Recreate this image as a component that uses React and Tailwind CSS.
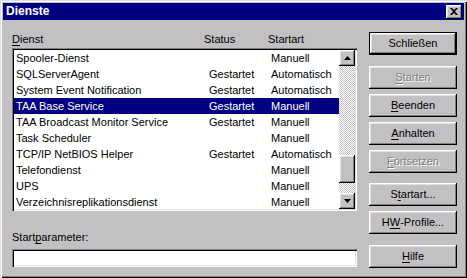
import React from 'react';

const services = [
  { name: 'Spooler-Dienst', status: '', start: 'Manuell' },
  { name: 'SQLServerAgent', status: 'Gestartet', start: 'Automatisch' },
  { name: 'System Event Notification', status: 'Gestartet', start: 'Automatisch' },
  { name: 'TAA Base Service', status: 'Gestartet', start: 'Manuell', selected: true },
  { name: 'TAA Broadcast Monitor Service', status: 'Gestartet', start: 'Manuell' },
  { name: 'Task Scheduler', status: '', start: 'Manuell' },
  { name: 'TCP/IP NetBIOS Helper', status: 'Gestartet', start: 'Automatisch' },
  { name: 'Telefondienst', status: '', start: 'Manuell' },
  { name: 'UPS', status: '', start: 'Manuell' },
  { name: 'Verzeichnisreplikationsdienst', status: '', start: 'Manuell' },
];

const bevel =
  'shadow-[inset_-1px_-1px_0_#000,inset_1px_1px_0_#fff,inset_-2px_-2px_0_#808080,inset_2px_2px_0_#dfdfdf]';
const sunken =
  'shadow-[inset_1px_1px_0_#808080,inset_2px_2px_0_#000,inset_-1px_-1px_0_#fff,inset_-2px_-2px_0_#dfdfdf]';

// label with one underlined access key
const Label = ({ text, k }) => (
  <>
    {text.slice(0, k)}
    <span className="underline underline-offset-2">{text[k]}</span>
    {text.slice(k + 1)}
  </>
);

const Button = ({ text, k, disabled, isDefault, className = '' }) => {
  const look = disabled ? 'text-[#808080] [text-shadow:1px_1px_0_#fff]' : 'text-black';
  if (isDefault) {
    return (
      <div className={`w-[88px] h-[23px] border border-black ${className}`}>
        <div className={`w-full h-full flex items-center justify-center ${bevel} ${look}`}>{text}</div>
      </div>
    );
  }
  return (
    <div className={`w-[88px] h-[23px] flex items-center justify-center ${bevel} ${look} ${className}`}>
      {k === undefined ? text : <Label text={text} k={k} />}
    </div>
  );
};

const Arrow = ({ up }) => (
  <svg width="7" height="4" viewBox="0 0 7 4">
    <path d={up ? 'M3.5 0 L7 4 L0 4 Z' : 'M0 0 L7 0 L3.5 4 Z'} fill="#000" />
  </svg>
);

const dither = 'bg-[repeating-conic-gradient(#c3c0c3_0_25%,#fff_0_50%)] bg-[length:2px_2px]';

export default function App() {
  return (
    <div className="w-[467px] h-[278px] bg-[#c3c0c3] p-[3px] flex flex-col font-['Liberation_Sans',Arial,sans-serif] text-[11px] leading-[13px] text-black shadow-[inset_1px_1px_0_#dfdfdf,inset_2px_2px_0_#fff,inset_-1px_-1px_0_#000,inset_-2px_-2px_0_#808080]">
      {/* title bar */}
      <div className="h-[17px] bg-[#000080] flex items-center justify-between pl-[3px] pr-[2px]">
        <span className="text-white font-bold text-[12px]">Dienste</span>
        <div className={`w-[16px] h-[14px] flex items-center justify-center ${bevel} bg-[#c3c0c3]`}>
          <svg width="8" height="7" viewBox="0 0 8 7">
            <path d="M0 0h2l2 2 2-2h2L5 3.5 8 7H6L4 5 2 7H0l3-3.5z" fill="#000" />
          </svg>
        </div>
      </div>

      <div className="flex flex-1">
        {/* left column */}
        <div className="ml-[9px] w-[345px] flex flex-col">
          <div className="mt-[13px] h-[13px] flex">
            <span className="w-[192px]"><Label text="Dienst" k={0} /></span>
            <span className="w-[64px]">Status</span>
            <span>Startart</span>
          </div>
          <div className={`mt-[2px] h-[163px] bg-white p-[2px] flex ${sunken}`}>
            <div className="flex-1 flex flex-col">
              {services.map((s) => (
                <div
                  key={s.name}
                  className={`h-[16px] leading-[16px] flex pl-[2px] ${s.selected ? 'bg-[#000080] text-white' : ''}`}
                >
                  <span className="w-[193px] whitespace-nowrap">{s.name}</span>
                  <span className="w-[62px]">{s.status}</span>
                  <span>{s.start}</span>
                </div>
              ))}
            </div>
            <div className={`w-[16px] flex flex-col ${dither}`}>
              <div className={`h-[16px] flex items-center justify-center bg-[#c3c0c3] ${bevel}`}>
                <Arrow up />
              </div>
              <div className="h-[89px]" />
              <div className={`h-[28px] bg-[#c3c0c3] ${bevel}`} />
              <div className="flex-1" />
              <div className={`h-[16px] flex items-center justify-center bg-[#c3c0c3] ${bevel}`}>
                <Arrow />
              </div>
            </div>
          </div>
          <div className="mt-[20px] h-[13px]">
            <Label text="Startparameter:" k={5} />
          </div>
          <div className={`mt-[5px] h-[18px] bg-white ${sunken}`} />
        </div>

        {/* right column */}
        <div className="ml-[12px] flex flex-col">
          <Button text="Schließen" isDefault className="mt-[12px]" />
          <Button text="Starten" k={0} disabled className="mt-[11px]" />
          <Button text="Beenden" k={0} className="mt-[5px]" />
          <Button text="Anhalten" k={0} className="mt-[5px]" />
          <Button text="Fortsetzen" k={0} disabled className="mt-[5px]" />
          <Button text="Startart..." k={1} className="mt-[10px]" />
          <Button text="HW-Profile..." k={1} className="mt-[5px]" />
          <Button text="Hilfe" k={0} className="mt-[11px]" />
        </div>
      </div>
    </div>
  );
}
